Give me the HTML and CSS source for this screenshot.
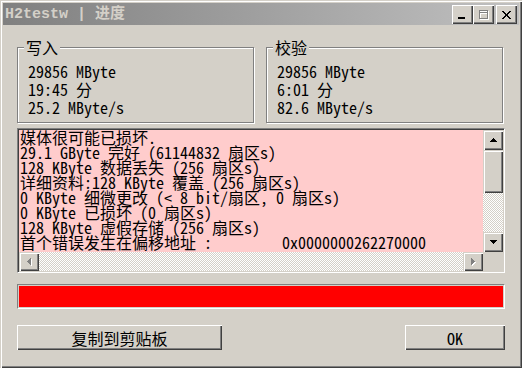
FILE: index.html
```html
<!DOCTYPE html>
<html lang="zh">
<head>
  <meta charset="UTF-8">
  <title>H2testw | 进度</title>
  <link rel="stylesheet" href="styles.css">
</head>
<body>
  <div class="window">
    <div class="titlebar">
      <span class="title">H2testw | 进度</span>
      <div class="caption-btns">
        <span class="cap-btn">
          <svg width="7" height="2" viewBox="0 0 7 2"><rect width="7" height="2" fill="#000"/></svg>
        </span>
        <span class="cap-btn cap-max">
          <svg width="10" height="10" viewBox="0 0 10 10" shape-rendering="crispEdges">
            <path d="M1.5 1.5h8v8h-8z M1 3h9" fill="none" stroke="#fff" stroke-width="1"/>
            <path d="M0.5 0.5h8v8h-8z M0 2h9" fill="none" stroke="#808080" stroke-width="1"/>
          </svg>
        </span>
        <span class="cap-btn cap-close">
          <svg width="9" height="8" viewBox="0 0 9 8" shape-rendering="crispEdges">
            <path d="M0 0h2v1h1v1h1v1h1V2h1V1h1V0h2v1H8v1H7v1H6v2h1v1h1v1h1v1H7V7H6V6H5V5H4v1H3v1H2v1H0V7h1V6h1V5h1V3H2V2H1V1H0z" fill="#000"/>
          </svg>
        </span>
      </div>
    </div>

    <div class="content">
      <div class="groups">
        <fieldset class="group">
          <legend>写入</legend>
          <div class="group-line">29856 MByte</div>
          <div class="group-line">19:45 分</div>
          <div class="group-line">25.2 MByte/s</div>
        </fieldset>
        <fieldset class="group">
          <legend>校验</legend>
          <div class="group-line">29856 MByte</div>
          <div class="group-line">6:01 分</div>
          <div class="group-line">82.6 MByte/s</div>
        </fieldset>
      </div>

      <div class="log">
        <div class="log-text">
          <div class="log-line">媒体很可能已损坏.</div>
          <div class="log-line">29.1 GByte 完好 (61144832 扇区s)</div>
          <div class="log-line">128 KByte 数据丢失 (256 扇区s)</div>
          <div class="log-line">详细资料:128 KByte 覆盖 (256 扇区s)</div>
          <div class="log-line">0 KByte 细微更改 (&lt; 8 bit/扇区, 0 扇区s)</div>
          <div class="log-line">0 KByte 已损坏 (0 扇区s)</div>
          <div class="log-line">128 KByte 虚假存储 (256 扇区s)</div>
          <div class="log-line"><span class="addr-label">首个错误发生在偏移地址 :</span>0x0000000262270000</div>
        </div>
        <div class="vscroll">
          <span class="sb-btn">
            <svg width="7" height="4" viewBox="0 0 7 4"><path d="M3 0h1v1h1v1h1v1h1v1H0V3h1V2h1V1h1z" fill="#000"/></svg>
          </span>
          <span class="sb-btn sb-thumb"></span>
          <span class="sb-track"></span>
          <span class="sb-btn">
            <svg width="7" height="4" viewBox="0 0 7 4"><path d="M0 0h7v1H6v1H5v1H4v1H3V3H2V2H1V1H0z" fill="#000"/></svg>
          </span>
        </div>
        <div class="hscroll">
          <span class="sb-btn">
            <svg width="5" height="8" viewBox="0 0 5 8">
              <path d="M5 1h-1v1h-1v1h-1v1h-1v1h1v1h1v1h1v1h1z" fill="#fff"/>
              <path d="M4 0h-1v1h-1v1h-1v1h-1v1h1v1h1v1h1v1h1z" fill="#808080"/>
            </svg>
          </span>
          <span class="sb-track"></span>
          <span class="sb-btn">
            <svg width="5" height="8" viewBox="0 0 5 8">
              <path d="M1 1h1v1h1v1h1v1h1v1h-1v1h-1v1h-1v1h-1z" fill="#fff"/>
              <path d="M0 0h1v1h1v1h1v1h1v1h-1v1h-1v1h-1v1h-1z" fill="#808080"/>
            </svg>
          </span>
        </div>
        <div class="corner"></div>
      </div>

      <div class="progress"><div class="progress-fill"></div></div>

      <div class="actions">
        <button class="btn btn-copy">复制到剪贴板</button>
        <button class="btn btn-ok">OK</button>
      </div>
    </div>
  </div>
</body>
</html>
```

FILE: styles.css
```css
* { margin: 0; padding: 0; box-sizing: border-box; }
body {
  font-family: "Noto Sans Mono CJK SC", "Liberation Mono", "Noto Sans CJK SC", monospace;
  font-size: 16px;
  background: #d4d0c8;
  color: #000;
}
.window {
  width: 522px;
  height: 368px;
  padding: 3px;
  background: #d4d0c8;
  box-shadow: inset 1px 1px 0 #d4d0c8, inset 2px 2px 0 #fff,
              inset -1px -1px 0 #404040, inset -2px -2px 0 #808080;
}

/* title bar */
.titlebar {
  height: 22px;
  display: flex;
  justify-content: space-between;
  align-items: flex-start;
  padding: 2px 2px 0 2px;
  background: linear-gradient(90deg, #808080, #c0c0c0);
}
.title {
  font-family: "Liberation Mono", "Noto Sans CJK SC", monospace;
  font-weight: 700;
  font-size: 15px;
  line-height: 19px;
  color: #d4d0c8;
  white-space: pre;
}
.caption-btns { display: flex; }
.cap-btn {
  width: 21px;
  height: 19px;
  display: flex;
  align-items: center;
  justify-content: center;
  background: #d4d0c8;
  box-shadow: inset 1px 1px 0 #fff, inset -1px -1px 0 #404040, inset -2px -2px 0 #808080;
}
.cap-btn:first-child { align-items: flex-end; padding-bottom: 5px; padding-right: 2px; }
.cap-close { margin-left: 2px; }

/* dialog body */
.content { padding: 13px 14px 0 14px; }
.groups {
  display: grid;
  grid-template-columns: 237px 237px;
  column-gap: 12px;
}
.group {
  border: 1px solid #808080;
  box-shadow: inset 1px 1px 0 #fff, 1px 1px 0 #fff;
  padding: 6px 10px 6px 10px;
  min-width: 0;
}
.group legend {
  margin-left: -4px;
  padding: 0 2px;
  line-height: 18px;
  background: #d4d0c8;
}
.group-line { line-height: 18px; height: 18px; white-space: pre; }

/* log box with scrollbars */
.log {
  margin-top: 5px;
  height: 145px;
  border: 1px solid;
  border-color: #808080 #fff #fff #808080;
  display: grid;
  grid-template-columns: 1fr 20px;
  grid-template-rows: 1fr 19px;
  box-shadow: inset 1px 1px 0 #404040, inset -1px -1px 0 #d4d0c8;
  padding: 1px;
}
.log-text {
  background: #ffcccc;
  padding-left: 1px;
  overflow: hidden;
}
.log-line { line-height: 15px; height: 15px; white-space: pre; }
.addr-label { display: inline-block; width: 262px; }

.vscroll { display: flex; flex-direction: column; }
.hscroll { display: flex; }
.sb-btn {
  flex: none;
  width: 20px;
  height: 20px;
  display: flex;
  align-items: center;
  justify-content: center;
  background: #d4d0c8;
  box-shadow: inset 1px 1px 0 #d4d0c8, inset 2px 2px 0 #fff,
              inset -1px -1px 0 #404040, inset -2px -2px 0 #808080;
}
.hscroll .sb-btn { height: 19px; }
.sb-thumb { height: 43px; }
.sb-track {
  flex: 1;
  background: repeating-conic-gradient(#fff 0 25%, #d4d0c8 0 50%) 0 0 / 2px 2px;
}
.corner { background: #d4d0c8; }

/* progress */
.progress {
  margin-top: 11px;
  height: 25px;
  border: 1px solid;
  border-color: #808080 #fff #fff #808080;
  padding: 1px;
  background: #d4d0c8;
}
.progress-fill { height: 100%; background: #ff0000; }

/* buttons */
.actions {
  margin-top: 16px;
  display: flex;
  justify-content: space-between;
}
.btn {
  height: 25px;
  font-family: inherit;
  font-size: 16px;
  color: #000;
  background: #d4d0c8;
  border: none;
  box-shadow: inset 1px 1px 0 #fff, inset -1px -1px 0 #404040, inset -2px -2px 0 #808080;
}
.btn-copy { width: 205px; }
.btn-ok { width: 100px; }
```
